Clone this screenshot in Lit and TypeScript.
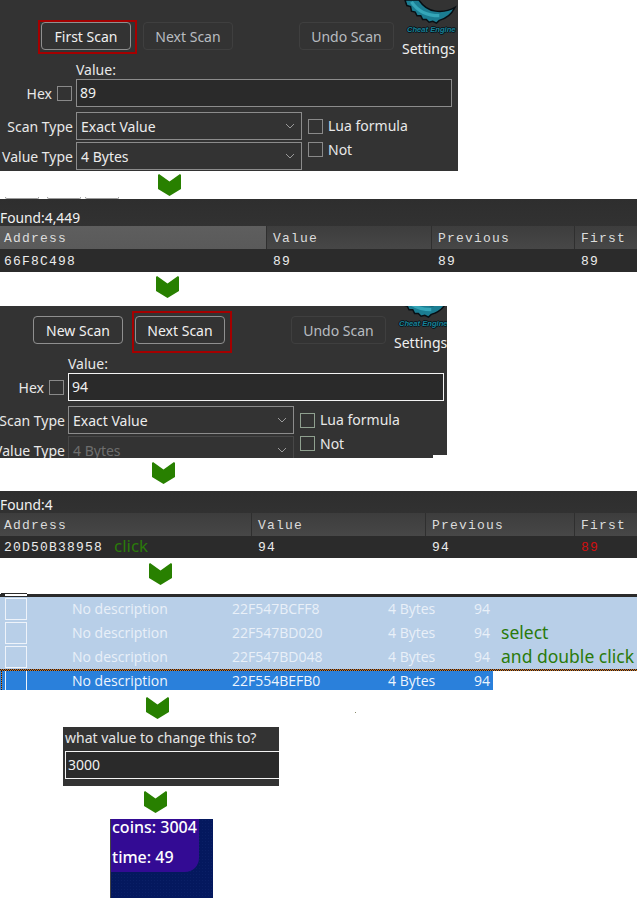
import { LitElement, html, css, svg } from "lit";
import { customElement } from "lit/decorators.js";

const chevron = (cls: string) => html`<div class="arrow ${cls}">
  <svg width="23" height="22" viewBox="0 0 23 22"><path d="M0 1 L1 0 L11.5 7.5 L22 0 L23 1 L23 15 L11.5 22 L0 15 Z" fill="#288000"/></svg>
</div>`;

const logo = svg`<path d="M1 0 L16 0 C20 6 26 11 34 12 C42 13 48 12 55 8 C52 14 46 20 38 22 L35 25 L31 23 L27 24 L24 21 L20 21 L18 17 L14 17 L12 13 L8 12 L7 7 L3 6 Z" fill="#1b7d92" stroke="#070f14" stroke-width="1.6"/>
<path d="M8 2 C14 11 24 17 38 17" fill="none" stroke="#35a6b8" stroke-width="3.5"/>`;

@customElement("app-root")
export class AppRoot extends LitElement {
  static styles = css`
    :host { display: block; width: 637px; height: 918px; background: #fff; overflow: hidden; font-family: "Noto Sans", "Open Sans", sans-serif; font-size: 14px; color: #e8e8e8; position: relative; }
    * { box-sizing: border-box; }

    .arrow { display: flex; height: 22px; }
    .arrow svg { display: block; }
    .a1 { padding-left: 158px; margin-top: 3px; }
    .a2 { padding-left: 156px; margin-top: 4px; }
    .a3 { padding-left: 152px; margin-top: 4px; }
    .a4 { padding-left: 149px; margin-top: 5px; }
    .a5 { padding-left: 146px; margin-top: 7px; }
    .a6 { padding-left: 144px; margin-top: 5px; }

    .scan { background: #333333; overflow: hidden; position: relative; }
    .scan.one { width: 458px; height: 171px; }
    .scan.two { width: 447px; height: 152px; margin-top: 8px; }
    .two::after { content: ""; position: absolute; right: 0; bottom: 0; width: 14px; height: 3px; background: #fff; }
    .inner { width: 458px; height: 171px; display: flex; flex-direction: column; }
    .two .inner { margin-left: -8px; margin-top: -12px; }

    .top { display: flex; height: 59px; }
    .btns { width: 402px; padding-top: 22px; display: flex; align-items: flex-start; }
    .btn { position: relative; width: 90px; height: 28px; border: 1px solid #3f3f3f; border-radius: 4px; color: #b8bcc0; display: flex; align-items: center; justify-content: center; font-size: 14px; flex: none; }
    .btn.on { border-color: #8f8f8f; color: #f0f0f0; }
    .btn.undo { width: 95px; }
    .btn.red::after { content: ""; position: absolute; left: -4px; top: -3px; width: 99px; height: 34px; border: 2px solid #a50000; box-sizing: border-box; }
    .btn.red.tall::after { left: -4px; top: -6px; width: 100px; height: 42px; }
    .b1 { margin-left: 41px; }
    .b2 { margin-left: 12px; }
    .b3 { margin-left: 66px; }
    .side { width: 56px; display: flex; flex-direction: column; }
    .side svg { display: block; height: 27px; overflow: hidden; }
    .engine { height: 10px; padding-left: 5px; font: italic bold 7.6px/10px "Liberation Sans", sans-serif; color: #1a8297; text-shadow: 1px 0 0 #06121a, -1px 0 0 #06121a, 0 1px 0 #06121a, 0 -1px 0 #06121a; white-space: nowrap; }
    .settings { font-size: 14px; line-height: 20px; margin-top: 4px; color: #f0f0f0; white-space: nowrap; }

    .form { display: grid; grid-template-columns: 76px 226px 150px; grid-template-rows: 20px 28px 33px 30px; }
    .val-label { grid-column: 2; line-height: 20px; margin-top: 1px; }
    .hexcell { grid-column: 1; display: flex; align-items: center; justify-content: flex-end; gap: 5px; padding-right: 4px; }
    .box { width: 15px; height: 15px; border: 1px solid #8a8a8a; flex: none; }
    .input { grid-column: 2 / span 2; border: 1px solid #8c8c8c; background: #2a2a2a; padding-left: 3px; display: flex; align-items: center; line-height: 20px; color: #f0f0f0; }
    .two .input { border-color: #f4f4f4; }
    .lab { grid-column: 1; text-align: right; padding-right: 3px; padding-top: 1px; line-height: 28px; white-space: nowrap; }
    .sel { grid-column: 2; height: 28px; border: 1px solid #8c8c8c; padding-left: 4px; display: flex; align-items: center; justify-content: space-between; color: #ececec; padding-right: 6px; }
    .sel svg { display: block; }
    .sel.off { border-color: #484848; color: #6e6e6e; }
    .r1 { margin-top: 5px; grid-row: 3; }
    .r2 { margin-top: 2px; grid-row: 4; }
    .chk { grid-column: 3; height: 28px; display: flex; align-items: center; gap: 5px; padding-left: 6px; line-height: 20px; }
    .chk.r2 { height: 15px; }
    .two .chk .box { border-color: #8fa08f; }

    .res { overflow: hidden; background: linear-gradient(#2e2e2e, #383838); display: flex; flex-direction: column; }
    .res.first { height: 73px; }
    .res.second { height: 67px; margin-top: 7px; }
    .found { height: 27px; padding-top: 8px; line-height: 20px; white-space: nowrap; }
    .found span { display: inline-block; font-size: 15px; color: #f2f2f2; transform: scaleX(0.92); transform-origin: left center; }
    .second .found { height: 22px; padding-top: 3px; }
    .hdr, .row { display: flex; font-family: "Liberation Mono", monospace; font-size: 13px; letter-spacing: 1.2px; color: #dcdcdc; }
    .hdr { height: 23px; align-items: center; background: linear-gradient(#3d3d3d, #474747); }
    .row { height: 23px; align-items: center; background: #2b2b2b; color: #ececec; }
    .second .row { height: 22px; }
    .c { flex: none; padding-left: 7px; padding-top: 1px; height: 100%; display: flex; align-items: center; white-space: nowrap; }
    .c:first-child { padding-left: 4px; }
    .hdr .c + .c { border-left: 1px solid #2f2f2f; padding-left: 6px; }
    .hdr .c.hot { background: linear-gradient(#5e5e5e, #5a5a5a); }
    .first .c1 { width: 266px; } .first .c2 { width: 165px; } .first .c3 { width: 143px; }
    .second .c1 { width: 251px; } .second .c2 { width: 174px; } .second .c3 { width: 149px; }
    .c4 { flex: 1; }
    .click { font-family: "Noto Sans", sans-serif; font-size: 17px; letter-spacing: 0; color: #2a7a0a; margin-left: 11px; margin-bottom: 4px; }
    .red-t { color: #d20f0f; }

    .stubs { display: flex; height: 2px; margin-top: 1px; padding-left: 5px; }
    .stub { height: 2px; border: 1px solid #9a9a9a; border-top: none; border-radius: 0 0 3px 3px; width: 34px; }
    .stub.s2 { margin-left: 8px; }
    .stub.s3 { margin-left: 4px; }

    .list { margin-top: 9px; position: relative; }
    .topline { position: absolute; left: 1px; top: -1px; width: 26px; height: 1px; background: #2b2b2b; }
    .topcheck { position: absolute; left: 5px; top: 0; width: 22px; height: 2px; background: #fff; }
    .bar { height: 3px; background: #2b2b2b; }
    .rows { background: #b8cfe8; height: 72px; }
    .li { height: 24px; display: flex; align-items: center; color: #e9f0f8; font-family: "Open Sans", "Noto Sans", sans-serif; font-size: 14px; position: relative; white-space: nowrap; }
    .li > span:not(.cb):not(.note) { margin-bottom: 1px; }
    .cb { width: 22px; height: 22px; border: 1px solid #eef3fa; margin-left: 5px; flex: none; }
    .d { margin-left: 45px; width: 160px; flex: none; }
    .addr { width: 156px; flex: none; }
    .ty { width: 86px; flex: none; }
    .note { position: absolute; left: 501px; top: -1px; color: #2a7a0a; font-size: 17.5px; font-family: "Noto Sans", sans-serif; }
    .sel-row { width: 493px; height: 19px; background: #2a80db; color: #eef5fd; display: flex; align-items: center; font-family: "Open Sans", "Noto Sans", sans-serif; font-size: 14px; white-space: nowrap; position: relative; }
    .sel-row::before { content: ""; position: absolute; left: 1px; top: 0; width: 1px; height: 100%; background: repeating-linear-gradient(#1a1a2a 0 1px, #d07a20 1px 2px); }
    .sel-row .cb { height: 19px; border-top: none; border-bottom: none; }
    .dots { height: 2px; background: repeating-conic-gradient(#d07a20 0 25%, #1a1a2a 0 50%) 0 0 / 2px 2px; }

    .speck { position: absolute; left: 355px; top: 712px; width: 1px; height: 1px; background: #8a8a6a; }

    .ask { width: 216px; height: 59px; margin-left: 63px; margin-top: 8px; background: #333; display: flex; flex-direction: column; overflow: hidden; }
    .ask-q { font-size: 14px; line-height: 22px; padding-left: 2px; height: 24px; color: #e6e6e6; white-space: nowrap; }
    .ask-in { height: 28px; margin-left: 2px; margin-right: -4px; border: 1px solid #f4f4f4; background: #2a2a2a; padding-left: 2px; line-height: 26px; color: #f0f0f0; }

    .game { width: 103px; height: 79px; margin-left: 110px; margin-top: 6px; background-color: #04185e; background-image: radial-gradient(#0a1f66 1px, transparent 1px); background-size: 3px 3px; border-left: 1px solid #444; }
    .purple { width: 88px; height: 53px; background: #330b94; border-bottom-right-radius: 14px; color: #fff; font-size: 16px; font-weight: 500; padding-left: 1px; line-height: 30px; white-space: nowrap; display: flex; flex-direction: column; }
    .purple div { height: 30px; flex: none; }
    .purple div:first-child { margin-top: -7px; }
  `;

  private panel(cls: string, first: boolean, value: string) {
    return html`<div class="scan ${cls}"><div class="inner">
      <div class="top">
        <div class="btns">
          <div class="btn b1 on ${first ? "red" : ""}">${first ? "First Scan" : "New Scan"}</div>
          <div class="btn b2 ${first ? "" : "on red tall"}">Next Scan</div>
          <div class="btn undo b3">Undo Scan</div>
        </div>
        <div class="side">
          <svg viewBox="0 0 56 27" width="56" height="27">${logo}</svg>
          <div class="engine">Cheat Engine</div>
          <div class="settings">Settings</div>
        </div>
      </div>
      <div class="form">
        <div class="val-label">Value:</div>
        <div class="hexcell"><span>Hex</span><span class="box"></span></div>
        <div class="input">${value}</div>
        <div class="lab r1">Scan Type</div>
        <div class="sel r1"><span>Exact Value</span>${this.caret()}</div>
        <div class="chk r1"><span class="box"></span><span>Lua formula</span></div>
        <div class="lab r2">Value Type</div>
        <div class="sel r2 ${first ? "" : "off"}"><span>4 Bytes</span>${this.caret()}</div>
        <div class="chk r2"><span class="box"></span><span>Not</span></div>
      </div>
    </div></div>`;
  }

  private caret() {
    return html`<svg width="10" height="6" viewBox="0 0 10 6"><path d="M1 1 L5 5 L9 1" fill="none" stroke="#9a9a9a" stroke-width="1"/></svg>`;
  }

  private results(cls: string, found: string, addr: string, v: string, click: boolean, first: string, hot: boolean, redFirst: boolean) {
    return html`<div class="res ${cls}">
      <div class="found"><span>${found}</span></div>
      <div class="hdr">
        <div class="c c1 ${hot ? "hot" : ""}">Address</div><div class="c c2">Value</div><div class="c c3">Previous</div><div class="c c4">First</div>
      </div>
      <div class="row">
        <div class="c c1">${addr}${click ? html`<span class="click">click</span>` : ""}</div>
        <div class="c c2">${v}</div><div class="c c3">${v}</div>
        <div class="c c4 ${redFirst ? "red-t" : ""}">${first}</div>
      </div>
    </div>`;
  }

  render() {
    const items = [
      ["22F547BCFF8", ""],
      ["22F547BD020", "select"],
      ["22F547BD048", "and double click"],
    ];
    return html`
      ${this.panel("one", true, "89")}
      ${chevron("a1")}
      <div class="stubs">
        <span class="stub"></span>
        <span class="stub s2"></span>
        <span class="stub s3"></span>
      </div>
      ${this.results("first", "Found:4,449", "66F8C498", "89", false, "89", true, false)}
      ${chevron("a2")}
      ${this.panel("two", false, "94")}
      ${chevron("a3")}
      ${this.results("second", "Found:4", "20D50B38958", "94", true, "89", false, true)}
      ${chevron("a4")}
      <div class="list">
        <div class="topline"></div>
        <div class="bar"></div>
        <div class="topcheck"></div>
        <div class="rows">
          ${items.map(([a, n]) => html`<div class="li">
            <span class="cb"></span><span class="d">No description</span><span class="addr">${a}</span><span class="ty">4 Bytes</span><span>94</span>
            ${n ? html`<span class="note">${n}</span>` : ""}
          </div>`)}
        </div>
        <div class="dots"></div>
        <div class="sel-row">
          <span class="cb"></span><span class="d">No description</span><span class="addr">22F554BEFB0</span><span class="ty">4 Bytes</span><span>94</span>
        </div>
      </div>
      ${chevron("a5")}
      <div class="speck"></div>
      <div class="ask">
        <div class="ask-q">what value to change this to?</div>
        <div class="ask-in">3000</div>
      </div>
      ${chevron("a6")}
      <div class="game">
        <div class="purple"><div>coins: 3004</div><div>time: 49</div></div>
      </div>
    `;
  }
}
